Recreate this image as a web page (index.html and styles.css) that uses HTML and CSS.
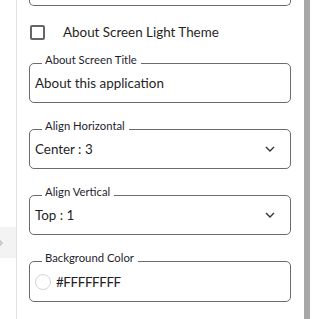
FILE: index.html
```html
<!DOCTYPE html>
<html lang="en">
<head>
<meta charset="utf-8">
<title>About Screen Settings</title>
<link rel="stylesheet" href="styles.css">
</head>
<body>
<div class="rail">
  <div class="handle">
    <svg class="handle-icon" width="6" height="8" viewBox="0 0 6 8"><polyline points="1,1 4,4 1,7" fill="none" stroke="#c4c4c4" stroke-width="1.6"/></svg>
  </div>
</div>
<main class="main">
  <div class="top-box"></div>
  <label class="check-row">
    <span class="checkbox"></span>
    <span class="check-text">About Screen Light Theme</span>
  </label>
  <div class="field">
    <span class="field-label">About Screen Title</span>
    <span class="field-value">About this application</span>
  </div>
  <div class="field">
    <span class="field-label">Align Horizontal</span>
    <span class="field-value">Center : 3</span>
    <svg class="chevron" width="10" height="6" viewBox="0 0 10 6"><polyline points="1,1 5,5 9,1" fill="none" stroke="#333" stroke-width="1.4"/></svg>
  </div>
  <div class="field">
    <span class="field-label">Align Vertical</span>
    <span class="field-value">Top : 1</span>
    <svg class="chevron" width="10" height="6" viewBox="0 0 10 6"><polyline points="1,1 5,5 9,1" fill="none" stroke="#333" stroke-width="1.4"/></svg>
  </div>
  <div class="field field-color">
    <span class="field-label">Background Color</span>
    <span class="swatch"></span>
    <span class="field-value color-value">#FFFFFFFF</span>
  </div>
</main>
<div class="scroll-track"><div class="scroll-thumb"></div></div>
</body>
</html>
```
FILE: styles.css
```css
html, body {
  margin: 0;
  padding: 0;
}
body {
  width: 314px;
  height: 319px;
  overflow: hidden;
  display: flex;
  background: #fff;
  font-family: "Lato", "Liberation Sans", sans-serif;
  color: #1f1f24;
}
.rail {
  width: 16px;
  flex: none;
  border-right: 1px solid #e2e2e2;
}
.handle {
  margin-top: 227px;
  height: 31px;
  background: #f3f3f3;
  display: flex;
  align-items: center;
}
.handle-icon {
  margin-left: -2px;
}
.main {
  width: 262px;
  flex: none;
  padding: 0 13px 0 12px;
}
.top-box {
  height: 5px;
  border: 1px solid #6b6b6b;
  border-top: none;
  border-radius: 0 0 5px 5px;
}
.check-row {
  display: flex;
  align-items: center;
  margin-top: 19px;
  height: 15px;
}
.checkbox {
  width: 15px;
  height: 15px;
  box-sizing: border-box;
  border: 2px solid #666;
  border-radius: 2px;
  margin-left: 1px;
  flex: none;
}
.check-text {
  font-size: 13.4px;
  line-height: 15px;
  margin-left: 18px;
}
.field {
  position: relative;
  box-sizing: border-box;
  height: 40px;
  margin-top: 23px;
  border: 1px solid #6b6b6b;
  border-radius: 5px;
  display: flex;
  align-items: center;
  padding: 0 15px 0 5px;
}
.field + .field {
  margin-top: 26px;
}
.field-color {
  height: 41px;
}
.field-label {
  position: absolute;
  left: 12px;
  top: -11px;
  padding: 0 4px 0 3px;
  background: #fff;
  font-size: 11.3px;
  line-height: 13px;
  color: #1e1e2e;
}
.field-value {
  font-size: 13.4px;
  line-height: 16px;
}
.chevron {
  margin-left: auto;
}
.swatch {
  width: 16px;
  height: 16px;
  box-sizing: border-box;
  border: 1px solid #d4d4d4;
  border-radius: 50%;
  background: #fff;
  flex: none;
}
.color-value {
  margin-left: 5px;
  letter-spacing: -0.4px;
}
.scroll-track {
  width: 10px;
  flex: none;
}
.scroll-thumb {
  width: 6px;
  height: 319px;
  background: #a8a8a8;
}
```
